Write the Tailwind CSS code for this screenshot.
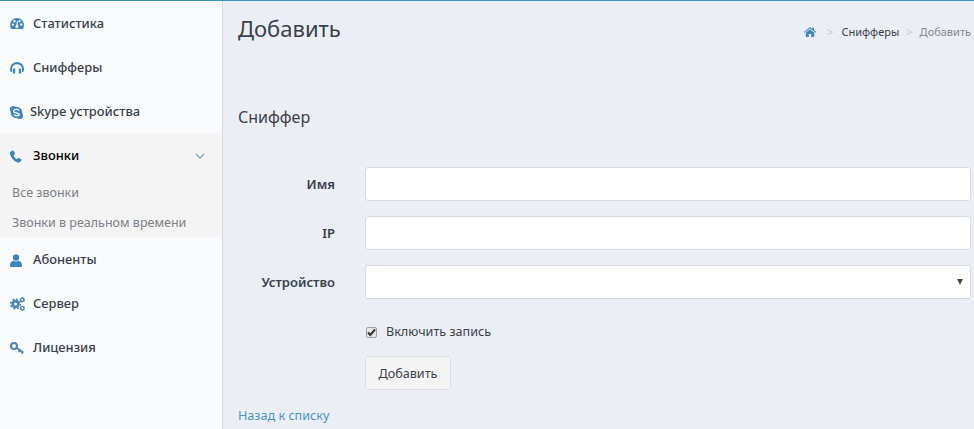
<!DOCTYPE html>
<html lang="ru">
<head>
    <meta charset="UTF-8">
    <meta name="viewport" content="width=device-width, initial-scale=1.0">
    <title>Добавить</title>
    <script src="https://cdn.jsdelivr.net/npm/@tailwindcss/browser@4"></script>
</head>
<body class="bg-[#ebeef4] font-['Noto_Sans',sans-serif] text-[#3a3f4b] h-[429px] overflow-hidden">
    <div class="border-t border-t-[#3d8fc6] flex h-[429px]">
        <!-- sidebar -->
        <aside class="w-[223px] shrink-0 bg-[#f9fafc] border-r border-[#d3d9e3]">
            <a class="flex items-center h-11 pt-[2px] pl-[10px] text-[12.9px] font-medium text-[#3a3f4b]">
                <svg class="w-[14px] h-[14px] mr-[9px]" viewBox="0 0 14 14" fill="#3f86b8"><path fill-rule="evenodd" d="M7 1A7 7 0 0 0 0 8c0 1.500.4 2.800 1.100 4h11.800c.7-1.200 1.100-2.500 1.100-4a7 7 0 0 0-7-7zM2.800 8.800a1.200 1.200 0 1 1 0-2.400 1.200 1.200 0 0 1 0 2.400zm1.700-3.300a1.200 1.200 0 1 1 0-2.400 1.200 1.200 0 0 1 0 2.400zM7 11.200a1.600 1.600 0 0 1-.8-3l.9-4.200h.7l-.1 4.300A1.600 1.600 0 0 1 7 11.200zm2.600-5.700a1.200 1.200 0 1 1 0-2.400 1.200 1.200 0 0 1 0 2.400zm1.600 3.300a1.200 1.200 0 1 1 0-2.400 1.200 1.200 0 0 1 0 2.400z"/></svg>
                Статистика
            </a>
            <a class="flex items-center h-11 pt-[2px] pl-[10px] text-[12.9px] font-medium text-[#3a3f4b]">
                <svg class="w-[14px] h-[12px] mr-[9px]" viewBox="0 0 14 12" fill="#3f86b8"><path d="M7 0A7 7 0 0 0 0 7c0 1 .2 1.900.6 2.700l.5.3h1V6.800H1.900A5.200 5.200 0 0 1 7 2.200a5.200 5.200 0 0 1 5.100 4.600h-.2V10h1l.5-.3c.4-.8.6-1.700.6-2.700a7 7 0 0 0-7-7z"/><rect x="2.900" y="6.500" width="2.300" height="5" rx=".6"/><rect x="8.800" y="6.500" width="2.300" height="5" rx=".6"/></svg>
                Снифферы
            </a>
            <a class="flex items-center h-11 pt-[2px] pl-[10px] text-[12.9px] font-medium text-[#3a3f4b]">
                <svg class="w-[13px] h-[13px] mr-[7px]" viewBox="0 0 13 13"><circle cx="6.500" cy="6.500" r="5.800" fill="#3f86b8"/><circle cx="3.300" cy="3.300" r="3.300" fill="#3f86b8"/><circle cx="9.700" cy="9.700" r="3.300" fill="#3f86b8"/><path d="M9.200 4.400C8.700 3.700 7.700 3.300 6.500 3.300c-1.600 0-2.800.7-2.800 1.900 0 2.400 5.600 1.300 5.600 3.300 0 .8-1.100 1.300-2.600 1.300-1.300 0-2.300-.5-2.800-1.300" fill="none" stroke="#fff" stroke-width="1.300"/></svg>
                Skype устройства
            </a>
            <div class="bg-[#f4f4f5] h-[104px]">
                <a class="flex items-center h-11 pt-[2px] pl-[10px] pr-[17px] text-[12.9px] font-medium text-black">
                    <svg class="w-[12px] h-[13px] mr-[11px]" viewBox="0 0 12 13" fill="#3f86b8"><path d="M2.600.6.8 1.600C.2 2-.1 2.800 0 3.600.5 7.500 4 11.500 8 12.600c.8.200 1.500 0 2-.6l1.400-1.600c.3-.4.200-.9-.2-1.100L8.800 8c-.4-.2-.8-.1-1.100.2l-.8 1C5.200 8.300 4 6.800 3.500 5l1.100-.6c.4-.2.500-.7.400-1.100L3.700 1C3.500.500 3 .3 2.600.6z"/></svg>
                    Звонки
                    <svg class="ml-auto w-[10px] h-[6px]" viewBox="0 0 10 6" fill="none" stroke="#6f9cc0" stroke-width="1.100"><path d="M1 1l4 4 4-4"/></svg>
                </a>
                <a class="block pl-3 h-[30px] leading-[32px] text-[12.5px] text-[#7d7f86]">Все звонки</a>
                <a class="block pl-3 h-[30px] leading-[32px] text-[12.5px] text-[#7d7f86]">Звонки в реальном времени</a>
            </div>
            <a class="flex items-center h-11 pt-[2px] pl-[10px] text-[12.9px] font-medium text-[#3a3f4b]">
                <svg class="w-[12px] h-[13px] mr-[11px]" viewBox="0 0 12 13" fill="#3f86b8"><circle cx="6" cy="3.500" r="3.200"/><path d="M0 11.500C0 8.800 1.500 7 3.200 6.700c1.700 1.100 3.900 1.100 5.600 0C10.500 7 12 8.800 12 11.500c0 1-.7 1.500-1.500 1.500h-9C.7 13 0 12.500 0 11.500z"/></svg>
                Абоненты
            </a>
            <a class="flex items-center h-11 pt-[2px] pl-[10px] text-[12.9px] font-medium text-[#3a3f4b]">
                <svg class="w-[15px] h-[14px] mr-[8px]" viewBox="0 0 15 14" fill="none" stroke="#4b84b4"><circle cx="5.500" cy="7" r="2.900" stroke-width="2.600"/><circle cx="5.500" cy="7" r="4.900" stroke-width="1.400" stroke-dasharray="2 1.850"/><circle cx="12.300" cy="2.800" r="1.800" stroke-width="1.400"/><circle cx="12.300" cy="11.200" r="1.800" stroke-width="1.400"/></svg>
                Сервер
            </a>
            <a class="flex items-center h-11 pt-[2px] pl-[10px] text-[12.9px] font-medium text-[#3a3f4b]">
                <svg class="w-[14px] h-[12px] mr-[9px]" viewBox="0 0 14 12" fill="none" stroke="#4b84b4" stroke-width="2"><circle cx="4" cy="4" r="3"/><path d="M6.500 5.800l7 5M10 8.300l-1.200 1.700M12.500 10l-1 1.500"/></svg>
                Лицензия
            </a>
        </aside>

        <!-- content -->
        <main class="flex-1 min-w-0 pl-[15px] pr-[3px]">
            <div class="flex items-start justify-between h-[105px]">
                <h1 class="text-[22px] leading-[30px] mt-[12px] text-[#3a3f4b]">Добавить</h1>
                <nav class="flex items-center text-[11px] mt-[24px] h-[14px]">
                    <svg class="w-[12px] h-[10px] mr-[10px]" viewBox="0 0 12 10" fill="#3f86b8"><path d="M6 0 0 5l.6.7L6 1.300l5.400 4.400.6-.7-2-1.700V.7H8.500v1.100z"/><path d="M6 2.300 1.800 5.700V10h3V7h2.400v3h3V5.700z"/></svg>
                    <span class="text-[#c4c7cc] mr-[8px] ml-[1px]">&gt;</span>
                    <span class="text-[#3a3f4b]">Снифферы</span>
                    <span class="text-[#c4c7cc] mx-[7px]">&gt;</span>
                    <span class="text-[#85878d]">Добавить</span>
                </nav>
            </div>
            <h2 class="text-[16px] leading-[22px] text-[#3a3f4b]">Сниффер</h2>

            <form class="mt-[39px]">
                <div class="flex items-center h-[34px] mb-[15px]">
                    <label class="w-[97px] pt-[2px] text-right text-[13px] font-semibold">Имя</label>
                    <input type="text" class="ml-[30px] flex-1 h-[34px] bg-white border border-[#d5dae3] rounded-[3px]">
                </div>
                <div class="flex items-center h-[34px] mb-[15px]">
                    <label class="w-[97px] pt-[2px] text-right text-[13px] font-semibold">IP</label>
                    <input type="text" class="ml-[30px] flex-1 h-[34px] bg-white border border-[#d5dae3] rounded-[3px]">
                </div>
                <div class="flex items-center h-[34px] mb-[15px]">
                    <label class="w-[97px] pt-[2px] text-right text-[13px] font-semibold">Устройство</label>
                    <div class="ml-[30px] flex-1 h-[34px] bg-white border border-[#d5dae3] rounded-[3px] flex items-center justify-end pr-[7px]">
                        <svg class="w-[6px] h-[6px]" viewBox="0 0 6 6" fill="#4a4a4a"><path d="M0 0h6L3 6z"/></svg>
                    </div>
                </div>
                <div class="pl-[127px]">
                    <label class="flex items-center h-[24px] mt-[21px] text-[12.6px]">
                        <span class="w-[11px] h-[11px] ml-px mr-[9px] bg-[#e6e6e6] border border-[#a0a0a0] rounded-[2px] flex items-center justify-center">
                            <svg class="w-[9px] h-[9px]" viewBox="0 0 9 9" fill="none" stroke="#333" stroke-width="2"><path d="M1 4.500l2.300 2.500L8 1.500"/></svg>
                        </span>
                        Включить запись
                    </label>
                    <button type="button" class="block mt-[12px] pt-[2px] w-[86px] h-[34px] bg-[#f4f4f5] border border-[#dcdfe4] rounded-[3px] text-[12.6px]">Добавить</button>
                </div>
            </form>
            <a class="block mt-[17px] text-[12.6px] leading-[18px] text-[#4a93c4]">Назад к списку</a>
        </main>
    </div>
</body>
</html>
